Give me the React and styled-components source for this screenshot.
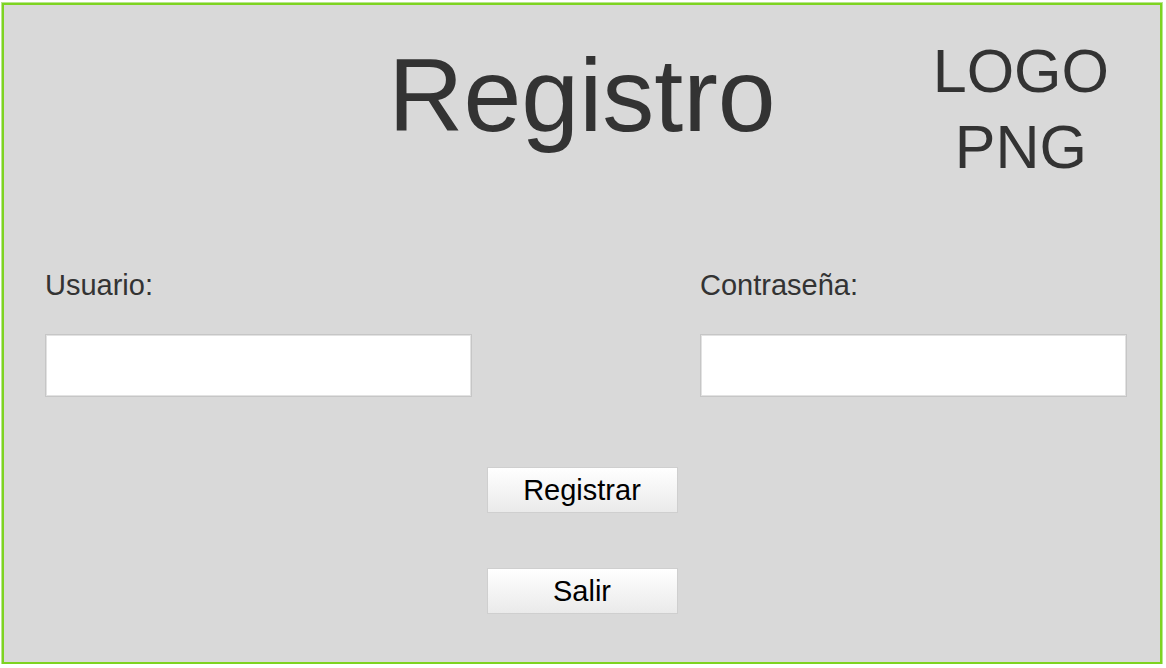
import React from 'react';
import styled, { createGlobalStyle } from 'styled-components';

const GlobalStyle = createGlobalStyle`
  html, body {
    margin: 0;
    padding: 0;
    background: #fff;
  }
  body {
    font-family: 'Liberation Sans', Arial, sans-serif;
  }
`;

const Frame = styled.main`
  box-sizing: border-box;
  width: 1160px;
  height: 661px;
  margin: 3px 0 0 2px;
  background: #d9d9d9;
  border: 2px solid #7ed321;
  box-shadow: 0 0 0 1px #b8e68c;
  display: flex;
  flex-direction: column;
`;

const Header = styled.header`
  display: grid;
  grid-template-columns: 1fr auto 1fr;
  align-items: start;
  height: 180px;
`;

const Title = styled.h1`
  grid-column: 2;
  margin: 38px 0 0;
  font-size: 104px;
  font-weight: normal;
  line-height: 1;
  color: #333;
`;

const Logo = styled.div`
  grid-column: 3;
  justify-self: end;
  margin: 28px 51px 0 0;
  font-size: 61px;
  line-height: 76px;
  color: #333;
  text-align: center;
`;

const Fields = styled.div`
  display: grid;
  grid-template-columns: 427px 427px;
  column-gap: 228px;
  padding-left: 41px;
  margin-top: 86px;
`;

const Field = styled.div`
  display: flex;
  flex-direction: column;
  gap: 34px;
`;

const Label = styled.label`
  font-size: 29px;
  line-height: 29px;
  color: #333;
`;

const Input = styled.input`
  box-sizing: border-box;
  width: 427px;
  height: 63px;
  margin: 0;
  border: 1px solid #c6c6c6;
  box-shadow: inset 0 0 0 1px #e2e2e2;
  background: #fff;
  outline: none;
  font-size: 24px;
  font-family: inherit;
  padding: 0 10px;
`;

const Actions = styled.div`
  display: flex;
  flex-direction: column;
  align-items: center;
  gap: 55px;
  margin-top: 70px;
`;

const Button = styled.button`
  box-sizing: border-box;
  width: 191px;
  height: 46px;
  border: 1px solid #cfcfcf;
  background: linear-gradient(#ffffff, #eaeaea);
  font-family: 'Liberation Sans', Arial, sans-serif;
  font-size: 29px;
  color: #000;
  padding: 0;
  cursor: pointer;
`;

const App = () => {
  const [user, setUser] = React.useState('');
  const [password, setPassword] = React.useState('');

  return (
    <>
      <GlobalStyle />
      <Frame>
        <Header>
          <Title>Registro</Title>
          <Logo>
            LOGO
            <br />
            PNG
          </Logo>
        </Header>
        <Fields>
          <Field>
            <Label htmlFor="usuario">Usuario:</Label>
            <Input
              id="usuario"
              value={user}
              onChange={e => setUser(e.target.value)}
            />
          </Field>
          <Field>
            <Label htmlFor="contrasena">Contraseña:</Label>
            <Input
              id="contrasena"
              type="password"
              value={password}
              onChange={e => setPassword(e.target.value)}
            />
          </Field>
        </Fields>
        <Actions>
          <Button>Registrar</Button>
          <Button>Salir</Button>
        </Actions>
      </Frame>
    </>
  );
};

export default App;
